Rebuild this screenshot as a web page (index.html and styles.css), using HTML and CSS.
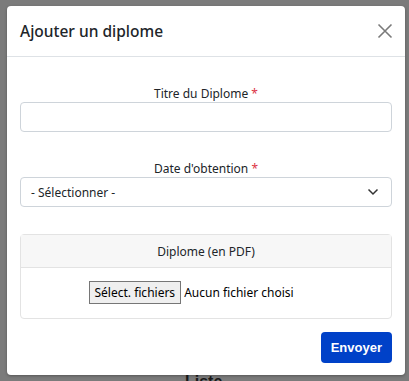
FILE: index.html
```html
<!DOCTYPE html>
<html lang="fr">
  <head>
    <meta charset="UTF-8" />
    <meta name="viewport" content="width=device-width, initial-scale=1.0" />
    <title>Ajouter un diplome</title>
    <link rel="stylesheet" href="styles.css">
  </head>
  <body>
    <div class="backdrop-text">Liste</div>
    <div class="modal">
      <div class="modal-header">
        <h5 class="modal-title">Ajouter un diplome</h5>
        <button class="close" type="button" aria-label="Fermer">
          <svg width="16" height="16" viewBox="0 0 16 16">
            <path d="M1.5 1.5 L14.5 14.5 M14.5 1.5 L1.5 14.5" stroke="#7a7a7a" stroke-width="1.6" fill="none" />
          </svg>
        </button>
      </div>

      <div class="modal-body">
        <div class="form-group">
          <label for="titre">Titre du Diplome <span class="req">*</span></label>
          <input type="text" id="titre" class="form-control" />
        </div>

        <div class="form-group">
          <label for="date">Date d'obtention <span class="req">*</span></label>
          <div class="select">
            <span>- Sélectionner -</span>
            <svg width="12" height="8" viewBox="0 0 12 8">
              <path d="M1.5 1.5 L6 6 L10.5 1.5" stroke="#333" stroke-width="1.5" fill="none" />
            </svg>
          </div>
        </div>

        <!-- fichier -->
        <div class="card">
          <div class="card-header">Diplome (en PDF)</div>
          <div class="card-body">
            <div class="file-input">
              <span class="file-btn">Sélect. fichiers</span>
              <span class="file-name">Aucun fichier choisi</span>
            </div>
          </div>
        </div>
      </div>

      <div class="modal-footer">
        <button class="btn-primary" type="button">Envoyer</button>
      </div>
    </div>
  </body>
</html>
```

FILE: styles.css
```css
body {
  margin: 0;
  padding: 6px 0 0 7px;
  background: #7b7b7b;
  font-family: "Noto Sans", "Open Sans", sans-serif;
  color: #212529;
  position: relative;
  height: 375px;
  overflow: hidden;
}
.backdrop-text {
  position: absolute;
  left: 185px;
  top: 374px;
  font-family: "Liberation Sans", Arial, sans-serif;
  font-weight: bold;
  font-size: 16px;
  line-height: 16px;
  color: #1a1a1a;
}
.modal {
  position: relative;
  width: 398px;
  background: #fff;
  border-radius: 4px;
  box-shadow: 0 1px 3px rgba(0, 0, 0, 0.3);
}
.modal-header {
  height: 50px;
  display: flex;
  align-items: center;
  justify-content: space-between;
  padding: 0 12px 0 13px;
  border-bottom: 1px solid #dee2e6;
}
.modal-title {
  margin: 0;
  font-size: 15.5px;
  font-weight: 500;
  color: #212529;
}
.close {
  border: 0;
  background: none;
  padding: 0;
  width: 16px;
  height: 16px;
  display: flex;
}
.modal-body {
  padding: 29px 13px 0;
}
.form-group {
  margin-bottom: 29px;
}
.form-group + .form-group {
  margin-bottom: 0;
}
.form-group label {
  display: block;
  text-align: center;
  font-size: 12px;
  line-height: 16px;
  color: #212529;
}
.req {
  color: #dc3545;
}
.form-control {
  display: block;
  width: 100%;
  height: 30px;
  box-sizing: border-box;
  border: 1px solid #ced4da;
  border-radius: 4px;
}
.select {
  height: 30px;
  box-sizing: border-box;
  border: 1px solid #ced4da;
  border-radius: 4px;
  display: flex;
  align-items: center;
  justify-content: space-between;
  padding: 0 12px 0 10px;
  font-size: 12px;
  color: #212529;
}
.card {
  margin-top: 27px;
  border: 1px solid #e3e3e3;
  border-radius: 4px;
}
.card-header {
  height: 32px;
  display: flex;
  align-items: center;
  justify-content: center;
  background: #f7f7f7;
  border-bottom: 1px solid #e3e3e3;
  font-size: 12px;
  color: #212529;
}
.card-body {
  height: 50px;
  display: flex;
  align-items: center;
  justify-content: center;
  font-size: 12px;
}
.file-input {
  width: 235px;
  display: flex;
  align-items: center;
  gap: 3px;
  margin-top: -2px;
}
.file-btn {
  border: 1px solid #767676;
  background: #efefef;
  padding: 2px 5px;
  line-height: 17px;
  color: #000;
}
.file-name {
  color: #000;
}
.modal-footer {
  display: flex;
  justify-content: flex-end;
  padding: 13px 13px 12px;
}
.btn-primary {
  height: 31px;
  padding: 0 10px;
  border: 0;
  border-radius: 4px;
  background: #0041c8;
  color: #fff;
  font-family: "Liberation Sans", Arial, sans-serif;
  font-weight: bold;
  font-size: 13px;
}
```
